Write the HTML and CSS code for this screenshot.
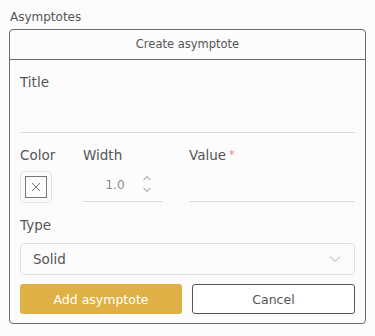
FILE: index.html
```html
<!DOCTYPE html>
<html lang="en">
<head>
    <meta charset="UTF-8">
    <title>Asymptotes</title>
    <link rel="stylesheet" href="styles.css">
</head>
<body>
    <div class="section-label">Asymptotes</div>

    <div class="panel">
        <div class="panel-header">Create asymptote</div>

        <div class="panel-body">
            <!-- Title field -->
            <div class="field">
                <label class="field-label">Title</label>
                <div class="line-input title-input"></div>
            </div>

            <div class="row">
                <div class="field color-field">
                    <label class="field-label">Color</label>
                    <div class="swatch">
                        <div class="swatch-inner">
                            <svg width="10" height="10" viewBox="0 0 10 10">
                                <path d="M1 1 L9 9 M9 1 L1 9" stroke="#777" stroke-width="1" fill="none"/>
                            </svg>
                        </div>
                    </div>
                </div>
                <div class="field width-field">
                    <label class="field-label">Width</label>
                    <div class="line-input number-input">
                        <span class="number-value">1.0</span>
                        <span class="spinner">
                            <svg width="10" height="18" viewBox="0 0 10 18">
                                <path d="M1.5 5 L5 1.5 L8.5 5" stroke="#888" stroke-width="1" fill="none"/>
                                <path d="M1.5 13 L5 16.5 L8.5 13" stroke="#888" stroke-width="1" fill="none"/>
                            </svg>
                        </span>
                    </div>
                </div>
                <div class="field value-field">
                    <label class="field-label">Value<span class="required">*</span></label>
                    <div class="line-input"></div>
                </div>
            </div>

            <div class="field type-field">
                <label class="field-label">Type</label>
                <div class="select">
                    <span>Solid</span>
                    <svg width="12" height="8" viewBox="0 0 12 8">
                        <path d="M1 1.5 L6 6.5 L11 1.5" stroke="#aaa" stroke-width="1" fill="none"/>
                    </svg>
                </div>
            </div>

            <div class="actions">
                <button class="btn btn-primary">Add asymptote</button>
                <button class="btn btn-outline">Cancel</button>
            </div>
        </div>
    </div>
</body>
</html>
```

FILE: styles.css
```css
body {
    margin: 0;
    padding: 7px 9px 0 9px;
    background-color: #fcfcfd;
    font-family: "DejaVu Sans", sans-serif;
    color: #555;
}
.section-label {
    font-size: 12px;
    height: 22px;
    line-height: 20px;
    padding-left: 1px;
}
/* Outer card */
.panel {
    border: 1px solid #6b6b6b;
    border-radius: 4px;
    height: 295px;
    box-sizing: border-box;
}
.panel-header {
    height: 30px;
    line-height: 29px;
    text-align: center;
    font-size: 11.5px;
    border-bottom: 1px solid #6b6b6b;
    box-sizing: border-box;
}
.panel-body {
    padding: 13px 10px 0 10px;
}
.field {
    display: flex;
    flex-direction: column;
}
.field-label {
    font-size: 13.5px;
    line-height: 18px;
    color: #555;
}
.required {
    color: #ef7b7b;
    font-size: 11px;
    vertical-align: top;
    margin-left: 3px;
}
.line-input {
    border-bottom: 1px solid #dcdce4;
    box-sizing: border-box;
}
.title-input {
    height: 42px;
    margin-bottom: 13px;
}
.row {
    display: flex;
}
.color-field {
    width: 63px;
}
.width-field {
    width: 80px;
    margin-right: 26px;
}
.value-field {
    flex: 1;
}
.value-field .line-input {
    height: 38px;
}
.swatch {
    margin-top: 7px;
    width: 32px;
    height: 32px;
    border: 1px solid #e2e2ea;
    border-radius: 4px;
    box-sizing: border-box;
    display: flex;
    justify-content: center;
    align-items: center;
}
.swatch-inner {
    width: 22px;
    height: 22px;
    border: 1px solid #777;
    box-sizing: border-box;
    display: flex;
    justify-content: center;
    align-items: center;
}
.number-input {
    height: 38px;
    display: flex;
    align-items: center;
    padding-top: 4px;
}
.number-value {
    flex: 1;
    text-align: center;
    font-size: 12px;
    color: #8a8a8a;
    padding-left: 5px;
}
.spinner {
    display: flex;
    margin-right: 11px;
    margin-top: -2px;
}
.type-field {
    margin-top: 13px;
}
.select {
    margin-top: 9px;
    height: 32px;
    border: 1px solid #dfe1ea;
    border-radius: 4px;
    box-sizing: border-box;
    display: flex;
    align-items: center;
    justify-content: space-between;
    padding: 0 13px 0 12px;
    font-size: 13.5px;
    color: #555;
}
.actions {
    display: flex;
    gap: 10px;
    margin-top: 9px;
}
.btn {
    height: 30px;
    font-family: "DejaVu Sans", sans-serif;
    font-size: 12.5px;
    border-radius: 3px;
    cursor: pointer;
}
.btn-primary {
    width: 162px;
    background-color: #dfb045;
    border: none;
    color: #fff;
}
.btn-outline {
    flex: 1;
    background-color: #fff;
    border: 1px solid #555;
    color: #555;
}
```
